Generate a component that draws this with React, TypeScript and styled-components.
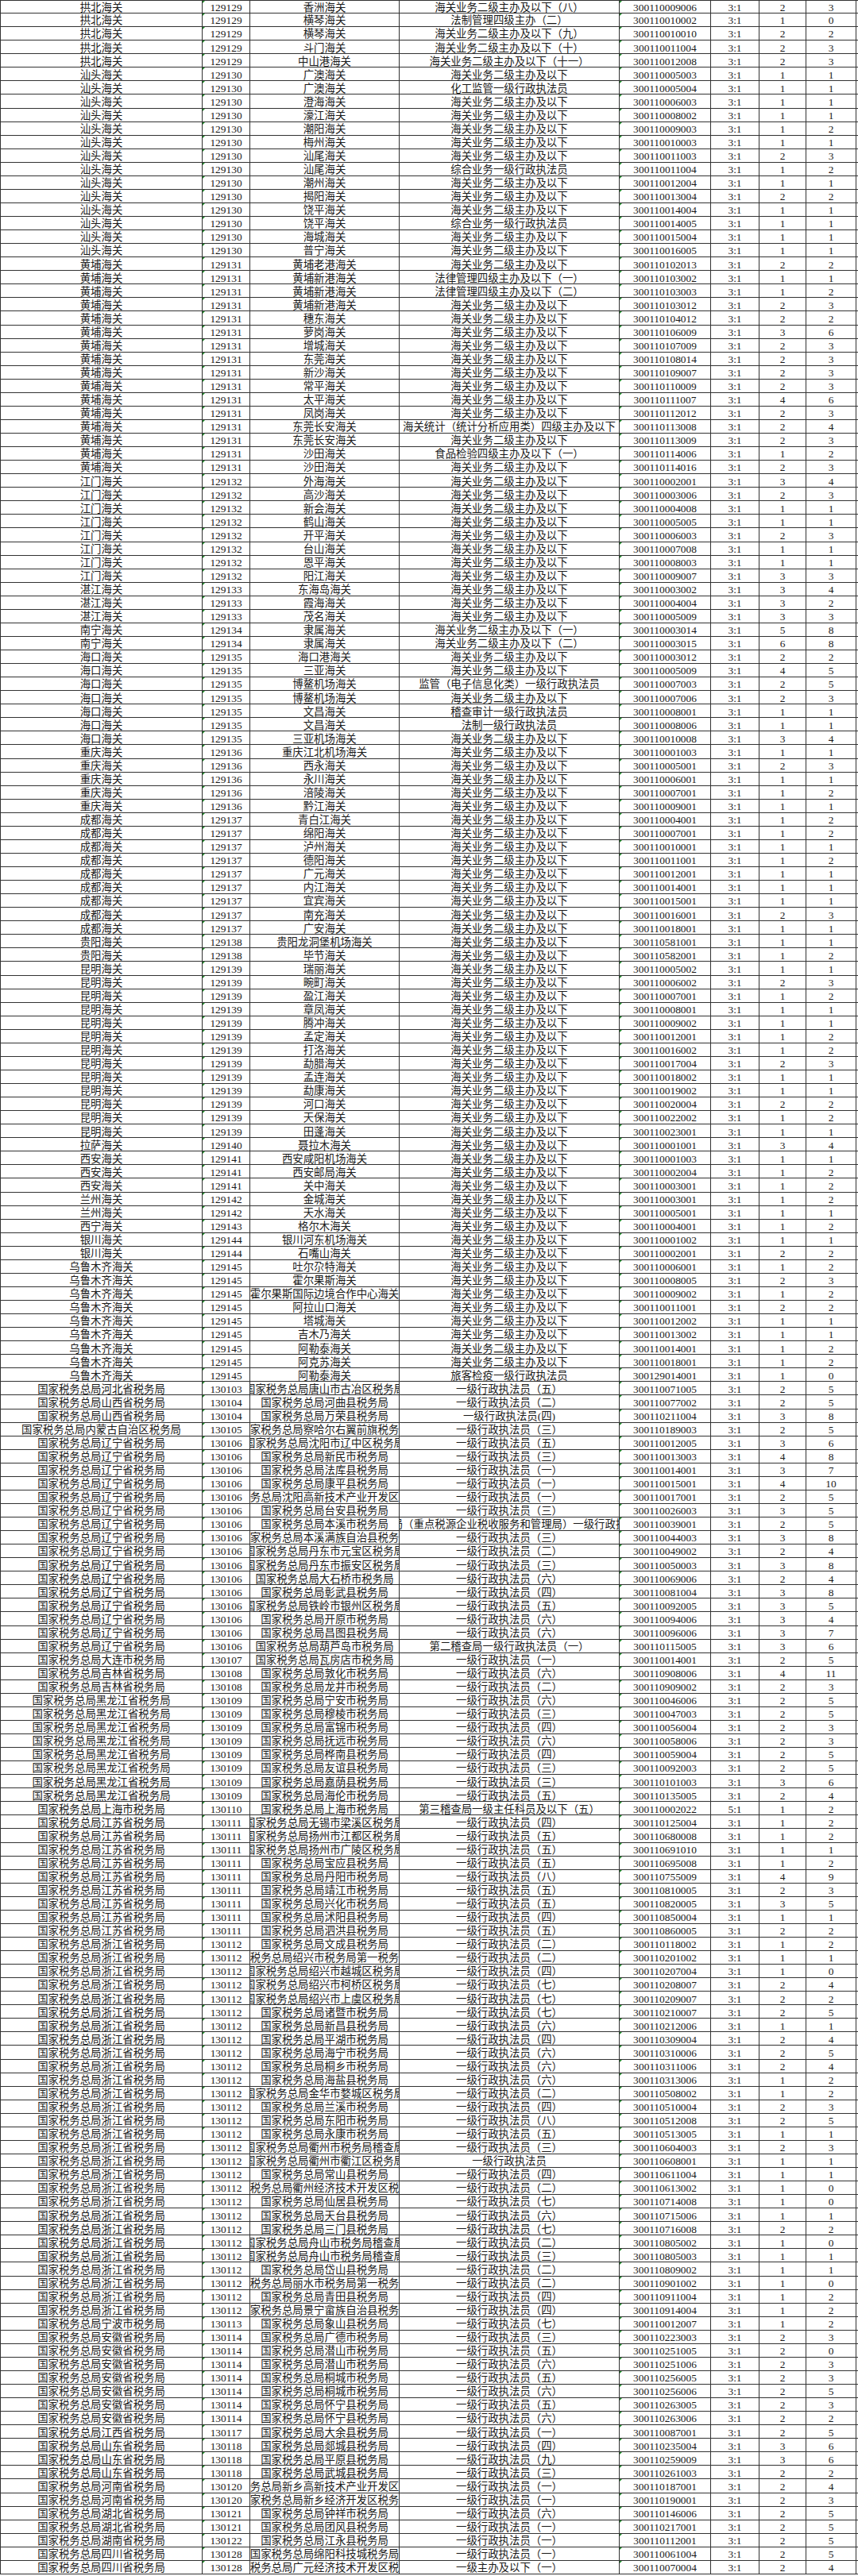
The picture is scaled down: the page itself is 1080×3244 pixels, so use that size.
import React from 'react';
import styled, { createGlobalStyle, css } from 'styled-components';

const GlobalStyle = createGlobalStyle`
  html, body { margin: 0; padding: 0; background: #ffffff; }
  body { width: 1080px; }
`;

const ROW_H = 3244 / 190;
const LINE = '#333333';

const Sheet = styled.div`
  display: flex;
  flex-direction: column;
  width: 1080px;
  font-family: "Liberation Serif", "Noto Sans CJK SC", serif;
  font-size: 13.4px;
  color: #1a1a1a;
`;

const Row = styled.div`
  display: grid;
  grid-template-columns: 254px 60px 188px 277px 115px 61px 59px 63px;
  height: ${ROW_H}px;
  box-sizing: border-box;
  border-left: 1px solid ${LINE};
  border-bottom: 1px solid ${LINE};
  &:first-child {
    border-top: 1px solid ${LINE};
  }
`;

const Cell = styled.div<{ $mark?: boolean }>`
  position: relative;
  display: flex;
  align-items: center;
  justify-content: center;
  overflow: hidden;
  white-space: nowrap;
  box-sizing: border-box;
  padding-top: 2px;
  border-right: 1px solid ${LINE};
  ${(p) =>
    p.$mark &&
    css`
      &::before {
        content: '';
        position: absolute;
        top: 0;
        left: 0;
        width: 0;
        height: 0;
        border-top: 3px solid #1f8a2a;
        border-right: 3px solid transparent;
      }
    `}
`;

const Text = styled.span`
  flex-shrink: 0;
  line-height: 1;
`;

type Rec = [string, string, string, string, string, string, string, string?];

const H = '海关业务二级主办及以下';
const Z = (n: string) => `一级行政执法员（${n}）`;
const T = (s: string) => `国家税务总局${s}税务局`;

const customs: Rec[] = [
  ['拱北海关', '129129', '香洲海关', H + '（八）', '300110009006', '2', '3'],
  ['拱北海关', '129129', '横琴海关', '法制管理四级主办（二）', '300110010002', '1', '0'],
  ['拱北海关', '129129', '横琴海关', H + '（九）', '300110010010', '2', '2'],
  ['拱北海关', '129129', '斗门海关', H + '（十）', '300110011004', '2', '3'],
  ['拱北海关', '129129', '中山港海关', H + '（十一）', '300110012008', '2', '3'],
  ['汕头海关', '129130', '广澳海关', H, '300110005003', '1', '1'],
  ['汕头海关', '129130', '广澳海关', '化工监管一级行政执法员', '300110005004', '1', '1'],
  ['汕头海关', '129130', '澄海海关', H, '300110006003', '1', '1'],
  ['汕头海关', '129130', '濠江海关', H, '300110008002', '1', '1'],
  ['汕头海关', '129130', '潮阳海关', H, '300110009003', '1', '2'],
  ['汕头海关', '129130', '梅州海关', H, '300110010003', '1', '1'],
  ['汕头海关', '129130', '汕尾海关', H, '300110011003', '2', '3'],
  ['汕头海关', '129130', '汕尾海关', '综合业务一级行政执法员', '300110011004', '1', '2'],
  ['汕头海关', '129130', '潮州海关', H, '300110012004', '1', '1'],
  ['汕头海关', '129130', '揭阳海关', H, '300110013004', '2', '2'],
  ['汕头海关', '129130', '饶平海关', H, '300110014004', '1', '1'],
  ['汕头海关', '129130', '饶平海关', '综合业务一级行政执法员', '300110014005', '1', '1'],
  ['汕头海关', '129130', '海城海关', H, '300110015004', '1', '1'],
  ['汕头海关', '129130', '普宁海关', H, '300110016005', '1', '1'],
  ['黄埔海关', '129131', '黄埔老港海关', H, '300110102013', '2', '2'],
  ['黄埔海关', '129131', '黄埔新港海关', '法律管理四级主办及以下（一）', '300110103002', '1', '1'],
  ['黄埔海关', '129131', '黄埔新港海关', '法律管理四级主办及以下（二）', '300110103003', '1', '2'],
  ['黄埔海关', '129131', '黄埔新港海关', H, '300110103012', '2', '3'],
  ['黄埔海关', '129131', '穗东海关', H, '300110104012', '2', '2'],
  ['黄埔海关', '129131', '萝岗海关', H, '300110106009', '3', '6'],
  ['黄埔海关', '129131', '增城海关', H, '300110107009', '2', '3'],
  ['黄埔海关', '129131', '东莞海关', H, '300110108014', '2', '3'],
  ['黄埔海关', '129131', '新沙海关', H, '300110109007', '2', '3'],
  ['黄埔海关', '129131', '常平海关', H, '300110110009', '2', '3'],
  ['黄埔海关', '129131', '太平海关', H, '300110111007', '4', '6'],
  ['黄埔海关', '129131', '凤岗海关', H, '300110112012', '2', '3'],
  ['黄埔海关', '129131', '东莞长安海关', '海关统计（统计分析应用类）四级主办及以下', '300110113008', '2', '4'],
  ['黄埔海关', '129131', '东莞长安海关', H, '300110113009', '2', '3'],
  ['黄埔海关', '129131', '沙田海关', '食品检验四级主办及以下（一）', '300110114006', '1', '2'],
  ['黄埔海关', '129131', '沙田海关', H, '300110114016', '2', '3'],
  ['江门海关', '129132', '外海海关', H, '300110002001', '3', '4'],
  ['江门海关', '129132', '高沙海关', H, '300110003006', '2', '3'],
  ['江门海关', '129132', '新会海关', H, '300110004008', '1', '1'],
  ['江门海关', '129132', '鹤山海关', H, '300110005005', '1', '1'],
  ['江门海关', '129132', '开平海关', H, '300110006003', '2', '3'],
  ['江门海关', '129132', '台山海关', H, '300110007008', '1', '1'],
  ['江门海关', '129132', '恩平海关', H, '300110008003', '1', '1'],
  ['江门海关', '129132', '阳江海关', H, '300110009007', '3', '3'],
  ['湛江海关', '129133', '东海岛海关', H, '300110003002', '3', '4'],
  ['湛江海关', '129133', '霞海海关', H, '300110004004', '3', '2'],
  ['湛江海关', '129133', '茂名海关', H, '300110005009', '3', '3'],
  ['南宁海关', '129134', '隶属海关', H + '（一）', '300110003014', '5', '8'],
  ['南宁海关', '129134', '隶属海关', H + '（二）', '300110003015', '6', '8'],
  ['海口海关', '129135', '海口港海关', H, '300110003012', '2', '2'],
  ['海口海关', '129135', '三亚海关', H, '300110005009', '4', '5'],
  ['海口海关', '129135', '博鳌机场海关', '监管（电子信息化类）一级行政执法员', '300110007003', '2', '5'],
  ['海口海关', '129135', '博鳌机场海关', H, '300110007006', '2', '3'],
  ['海口海关', '129135', '文昌海关', '稽查审计一级行政执法员', '300110008001', '1', '1'],
  ['海口海关', '129135', '文昌海关', '法制一级行政执法员', '300110008006', '1', '1'],
  ['海口海关', '129135', '三亚机场海关', H, '300110010008', '3', '4'],
  ['重庆海关', '129136', '重庆江北机场海关', H, '300110001003', '1', '1'],
  ['重庆海关', '129136', '西永海关', H, '300110005001', '2', '3'],
  ['重庆海关', '129136', '永川海关', H, '300110006001', '1', '1'],
  ['重庆海关', '129136', '涪陵海关', H, '300110007001', '1', '2'],
  ['重庆海关', '129136', '黔江海关', H, '300110009001', '1', '1'],
  ['成都海关', '129137', '青白江海关', H, '300110004001', '1', '2'],
  ['成都海关', '129137', '绵阳海关', H, '300110007001', '1', '2'],
  ['成都海关', '129137', '泸州海关', H, '300110010001', '1', '1'],
  ['成都海关', '129137', '德阳海关', H, '300110011001', '1', '2'],
  ['成都海关', '129137', '广元海关', H, '300110012001', '1', '1'],
  ['成都海关', '129137', '内江海关', H, '300110014001', '1', '1'],
  ['成都海关', '129137', '宜宾海关', H, '300110015001', '1', '1'],
  ['成都海关', '129137', '南充海关', H, '300110016001', '2', '3'],
  ['成都海关', '129137', '广安海关', H, '300110018001', '1', '1'],
  ['贵阳海关', '129138', '贵阳龙洞堡机场海关', H, '300110581001', '1', '1'],
  ['贵阳海关', '129138', '毕节海关', H, '300110582001', '1', '2'],
  ['昆明海关', '129139', '瑞丽海关', H, '300110005002', '1', '1'],
  ['昆明海关', '129139', '畹町海关', H, '300110006002', '2', '3'],
  ['昆明海关', '129139', '盈江海关', H, '300110007001', '1', '2'],
  ['昆明海关', '129139', '章凤海关', H, '300110008001', '1', '1'],
  ['昆明海关', '129139', '腾冲海关', H, '300110009002', '1', '1'],
  ['昆明海关', '129139', '孟定海关', H, '300110012001', '1', '2'],
  ['昆明海关', '129139', '打洛海关', H, '300110016002', '1', '2'],
  ['昆明海关', '129139', '勐腊海关', H, '300110017004', '2', '3'],
  ['昆明海关', '129139', '孟连海关', H, '300110018002', '1', '1'],
  ['昆明海关', '129139', '勐康海关', H, '300110019002', '1', '1'],
  ['昆明海关', '129139', '河口海关', H, '300110020004', '2', '2'],
  ['昆明海关', '129139', '天保海关', H, '300110022002', '1', '2'],
  ['昆明海关', '129139', '田蓬海关', H, '300110023001', '1', '1'],
  ['拉萨海关', '129140', '聂拉木海关', H, '300110001001', '3', '4'],
  ['西安海关', '129141', '西安咸阳机场海关', H, '300110001003', '1', '1'],
  ['西安海关', '129141', '西安邮局海关', H, '300110002004', '1', '2'],
  ['西安海关', '129141', '关中海关', H, '300110003001', '1', '2'],
  ['兰州海关', '129142', '金城海关', H, '300110003001', '1', '2'],
  ['兰州海关', '129142', '天水海关', H, '300110005001', '1', '1'],
  ['西宁海关', '129143', '格尔木海关', H, '300110004001', '1', '2'],
  ['银川海关', '129144', '银川河东机场海关', H, '300110001002', '1', '1'],
  ['银川海关', '129144', '石嘴山海关', H, '300110002001', '2', '2'],
  ['乌鲁木齐海关', '129145', '吐尔尕特海关', H, '300110006001', '1', '2'],
  ['乌鲁木齐海关', '129145', '霍尔果斯海关', H, '300110008005', '2', '3'],
  ['乌鲁木齐海关', '129145', '霍尔果斯国际边境合作中心海关', H, '300110009002', '1', '2'],
  ['乌鲁木齐海关', '129145', '阿拉山口海关', H, '300110011001', '2', '2'],
  ['乌鲁木齐海关', '129145', '塔城海关', H, '300110012002', '1', '1'],
  ['乌鲁木齐海关', '129145', '吉木乃海关', H, '300110013002', '1', '1'],
  ['乌鲁木齐海关', '129145', '阿勒泰海关', H, '300110014001', '1', '2'],
  ['乌鲁木齐海关', '129145', '阿克苏海关', H, '300110018001', '1', '2'],
  ['乌鲁木齐海关', '129145', '阿勒泰海关', '旅客检疫一级行政执法员', '300129014001', '1', '0'],
];

const LN = T('辽宁省');
const JL = T('吉林省');
const HLJ = T('黑龙江省');
const JS = T('江苏省');
const ZJ = T('浙江省');
const AH = T('安徽省');
const SD = T('山东省');
const HN = T('河南省');
const HB = T('湖北省');
const SC = T('四川省');

const tax: Rec[] = [
  [T('河北省'), '130103', T('唐山市古冶区'), Z('五'), '300110071005', '2', '5'],
  [T('山西省'), '130104', T('河曲县'), Z('二'), '300110077002', '2', '5'],
  [T('山西省'), '130104', T('万荣县'), '一级行政执法员(四)', '300110211004', '3', '8'],
  [T('内蒙古自治区'), '130105', T('察哈尔右翼前旗'), Z('三'), '300110189003', '2', '5'],
  [LN, '130106', T('沈阳市辽中区'), Z('五'), '300110012005', '3', '6'],
  [LN, '130106', T('新民市'), Z('三'), '300110013003', '4', '8'],
  [LN, '130106', T('法库县'), Z('一'), '300110014001', '3', '7'],
  [LN, '130106', T('康平县'), Z('一'), '300110015001', '4', '10'],
  [LN, '130106', T('沈阳高新技术产业开发区'), Z('一'), '300110017001', '2', '5'],
  [LN, '130106', T('台安县'), Z('三'), '300110026003', '3', '5'],
  [LN, '130106', T('本溪市'), '稽查局（重点税源企业税收服务和管理局）一级行政执法员', '300110039001', '2', '5'],
  [LN, '130106', T('本溪满族自治县'), Z('三'), '300110044003', '3', '8'],
  [LN, '130106', T('丹东市元宝区'), Z('二'), '300110049002', '2', '4'],
  [LN, '130106', T('丹东市振安区'), Z('三'), '300110050003', '3', '8'],
  [LN, '130106', T('大石桥市'), Z('六'), '300110069006', '2', '4'],
  [LN, '130106', T('彰武县'), Z('四'), '300110081004', '3', '8'],
  [LN, '130106', T('铁岭市银州区'), Z('五'), '300110092005', '3', '5'],
  [LN, '130106', T('开原市'), Z('六'), '300110094006', '3', '4'],
  [LN, '130106', T('昌图县'), Z('六'), '300110096006', '3', '7'],
  [LN, '130106', T('葫芦岛市'), '第二稽查局一级行政执法员（一）', '300110115005', '3', '6'],
  [T('大连市'), '130107', T('瓦房店市'), Z('一'), '300110014001', '2', '5'],
  [JL, '130108', T('敦化市'), Z('六'), '300110908006', '4', '11'],
  [JL, '130108', T('龙井市'), Z('二'), '300110909002', '2', '3'],
  [HLJ, '130109', T('宁安市'), Z('六'), '300110046006', '2', '5'],
  [HLJ, '130109', T('穆棱市'), Z('三'), '300110047003', '2', '5'],
  [HLJ, '130109', T('富锦市'), Z('四'), '300110056004', '2', '3'],
  [HLJ, '130109', T('抚远市'), Z('六'), '300110058006', '2', '3'],
  [HLJ, '130109', T('桦南县'), Z('四'), '300110059004', '2', '5'],
  [HLJ, '130109', T('友谊县'), Z('三'), '300110092003', '2', '5'],
  [HLJ, '130109', T('嘉荫县'), Z('三'), '300110101003', '3', '6'],
  [HLJ, '130109', T('海伦市'), Z('五'), '300110135005', '2', '4'],
  [T('上海市'), '130110', T('上海市'), '第三稽查局一级主任科员及以下（五）', '300110002022', '1', '2', '5:1'],
  [JS, '130111', T('无锡市梁溪区'), Z('四'), '300110125004', '1', '2'],
  [JS, '130111', T('扬州市江都区'), Z('五'), '300110680008', '1', '2'],
  [JS, '130111', T('扬州市广陵区'), Z('五'), '300110691010', '1', '1'],
  [JS, '130111', T('宝应县'), Z('五'), '300110695008', '1', '2'],
  [JS, '130111', T('丹阳市'), Z('八'), '300110755009', '4', '9'],
  [JS, '130111', T('靖江市'), Z('五'), '300110810005', '2', '3'],
  [JS, '130111', T('兴化市'), Z('五'), '300110820005', '3', '5'],
  [JS, '130111', T('沭阳县'), Z('四'), '300110850004', '1', '1'],
  [JS, '130111', T('泗洪县'), Z('五'), '300110860005', '2', '2'],
  [ZJ, '130112', T('文成县'), Z('二'), '300110118002', '1', '2'],
  [ZJ, '130112', '国家税务总局绍兴市税务局第一税务分局', Z('二'), '300110201002', '1', '1'],
  [ZJ, '130112', T('绍兴市越城区'), Z('四'), '300110207004', '1', '0'],
  [ZJ, '130112', T('绍兴市柯桥区'), Z('七'), '300110208007', '2', '4'],
  [ZJ, '130112', T('绍兴市上虞区'), Z('七'), '300110209007', '2', '2'],
  [ZJ, '130112', T('诸暨市'), Z('七'), '300110210007', '2', '5'],
  [ZJ, '130112', T('新昌县'), Z('六'), '300110212006', '1', '1'],
  [ZJ, '130112', T('平湖市'), Z('四'), '300110309004', '2', '4'],
  [ZJ, '130112', T('海宁市'), Z('六'), '300110310006', '2', '5'],
  [ZJ, '130112', T('桐乡市'), Z('六'), '300110311006', '2', '4'],
  [ZJ, '130112', T('海盐县'), Z('六'), '300110313006', '1', '2'],
  [ZJ, '130112', T('金华市婺城区'), Z('二'), '300110508002', '1', '2'],
  [ZJ, '130112', T('兰溪市'), Z('四'), '300110510004', '2', '3'],
  [ZJ, '130112', T('东阳市'), Z('八'), '300110512008', '2', '5'],
  [ZJ, '130112', T('永康市'), Z('五'), '300110513005', '1', '1'],
  [ZJ, '130112', '国家税务总局衢州市税务局稽查局', Z('三'), '300110604003', '2', '3'],
  [ZJ, '130112', T('衢州市衢江区'), '一级行政执法员', '300110608001', '1', '1'],
  [ZJ, '130112', T('常山县'), Z('四'), '300110611004', '1', '1'],
  [ZJ, '130112', T('衢州经济技术开发区'), Z('二'), '300110613002', '1', '0'],
  [ZJ, '130112', T('仙居县'), Z('七'), '300110714008', '1', '0'],
  [ZJ, '130112', T('天台县'), Z('六'), '300110715006', '1', '1'],
  [ZJ, '130112', T('三门县'), Z('七'), '300110716008', '2', '2'],
  [ZJ, '130112', '国家税务总局舟山市税务局稽查局', Z('二'), '300110805002', '1', '0'],
  [ZJ, '130112', '国家税务总局舟山市税务局稽查局', Z('三'), '300110805003', '1', '1'],
  [ZJ, '130112', T('岱山县'), Z('二'), '300110809002', '1', '1'],
  [ZJ, '130112', '国家税务总局丽水市税务局第一税务分局', Z('二'), '300110901002', '1', '0'],
  [ZJ, '130112', T('青田县'), Z('四'), '300110911004', '1', '2'],
  [ZJ, '130112', T('景宁畲族自治县'), Z('四'), '300110914004', '1', '2'],
  [T('宁波市'), '130113', T('象山县'), Z('七'), '300110012007', '1', '2'],
  [AH, '130114', T('广德市'), Z('三'), '300110223003', '2', '3'],
  [AH, '130114', T('潜山市'), Z('五'), '300110251005', '2', '0'],
  [AH, '130114', T('潜山市'), Z('六'), '300110251006', '2', '3'],
  [AH, '130114', T('桐城市'), Z('五'), '300110256005', '2', '3'],
  [AH, '130114', T('桐城市'), Z('六'), '300110256006', '2', '5'],
  [AH, '130114', T('怀宁县'), Z('五'), '300110263005', '2', '3'],
  [AH, '130114', T('怀宁县'), Z('六'), '300110263006', '2', '2'],
  [T('江西省'), '130117', T('大余县'), Z('一'), '300110087001', '2', '5'],
  [SD, '130118', T('郯城县'), Z('四'), '300110235004', '3', '6'],
  [SD, '130118', T('平原县'), Z('九'), '300110259009', '3', '6'],
  [SD, '130118', T('武城县'), Z('三'), '300110261003', '2', '2'],
  [HN, '130120', T('新乡高新技术产业开发区'), Z('一'), '300110187001', '2', '4'],
  [HN, '130120', T('新乡经济开发区'), Z('一'), '300110190001', '2', '3'],
  [HB, '130121', T('钟祥市'), Z('六'), '300110146006', '2', '5'],
  [HB, '130121', T('团风县'), Z('一'), '300110217001', '2', '5'],
  [T('湖南省'), '130122', T('江永县'), Z('一'), '300110112001', '2', '5'],
  [SC, '130128', T('绵阳科技城'), Z('一'), '300110061004', '2', '5'],
  [SC, '130128', T('广元经济技术开发区'), '一级主办及以下（一）', '300110070004', '2', '4'],
];

const rows: Rec[] = [...customs, ...tax];

const SheetRow: React.FC<{ rec: Rec }> = ({ rec }) => {
  const [dept, code, unit, pos, posCode, a, b, ratio] = rec;
  return (
    <Row>
      <Cell><Text>{dept}</Text></Cell>
      <Cell $mark><Text>{code}</Text></Cell>
      <Cell><Text>{unit}</Text></Cell>
      <Cell><Text>{pos}</Text></Cell>
      <Cell $mark><Text>{posCode}</Text></Cell>
      <Cell><Text>{ratio ?? '3:1'}</Text></Cell>
      <Cell><Text>{a}</Text></Cell>
      <Cell><Text>{b}</Text></Cell>
    </Row>
  );
};

export default function App() {
  return (
    <>
      <GlobalStyle />
      <Sheet>
        {rows.map((r, i) => (
          <SheetRow key={i} rec={r} />
        ))}
      </Sheet>
    </>
  );
}
